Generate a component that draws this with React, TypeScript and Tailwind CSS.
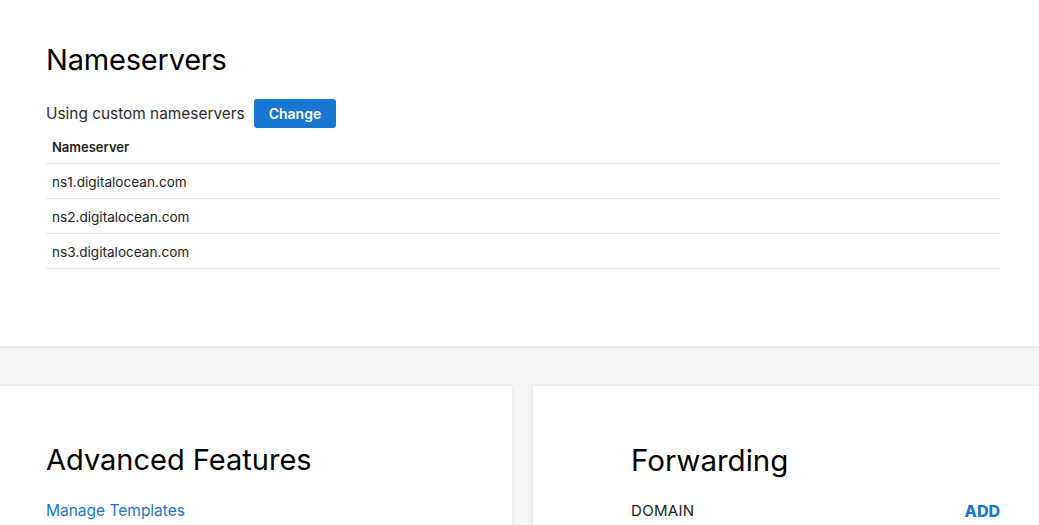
const servers = ['ns1.digitalocean.com', 'ns2.digitalocean.com', 'ns3.digitalocean.com'];

const App = () => {
  return (
    <div className="h-screen bg-[#f5f6f8] text-[#111] font-['Inter',sans-serif] overflow-hidden">
      <section className="bg-white pl-[46px] pr-[39px] pt-[40px] h-[346px] shadow-[0_1px_4px_rgba(0,0,0,0.12)] relative z-10">
        <h1 className="text-[29px] leading-[40px] font-normal tracking-[-0.2px] text-black">Nameservers</h1>
        <div className="flex items-center gap-[9px] mt-[19px]">
          <span className="text-[15.4px] text-[#2b2b2b]">Using custom nameservers</span>
          <button className="bg-[#1976d2] text-white font-semibold text-[14px] h-[29px] px-[15px] rounded-[3px]">
            Change
          </button>
        </div>
        <table className="w-full text-[13.6px] border-collapse">
          <thead>
            <tr className="border-b border-[#e6e6e6]">
              <th className="text-left font-semibold text-[13px] h-[35px] pt-[4px] pl-[6px] text-[#222]">Nameserver</th>
            </tr>
          </thead>
          <tbody>
            {servers.map((s) => (
              <tr key={s} className="border-b border-[#e6e6e6]">
                <td className="h-[35px] pt-[4px] pl-[6px] text-[#222]">{s}</td>
              </tr>
            ))}
          </tbody>
        </table>
      </section>

      <div className="flex gap-[21px] pt-[40px]">
        <div className="w-[512px] shrink-0 bg-white h-[160px] shadow-[0_0_4px_rgba(0,0,0,0.1)] pl-[46px] pt-[54px]">
          <h2 className="text-[29px] leading-[40px] text-black">Advanced Features</h2>
          <a href="#" className="block mt-[19px] text-[15.5px] text-[#1976d2]">Manage Templates</a>
        </div>
        <div className="flex-1 bg-white h-[160px] shadow-[0_0_4px_rgba(0,0,0,0.1)] pl-[98px] pr-[39px] pt-[54px]">
          <h2 className="text-[29.5px] leading-[40px] text-black">Forwarding</h2>
          <div className="flex items-center justify-between mt-[19px]">
            <span className="text-[15px] text-[#222] tracking-[0.3px]">DOMAIN</span>
            <a href="#" className="text-[16px] font-extrabold text-[#1976d2]">ADD</a>
          </div>
        </div>
      </div>
    </div>
  );
};

export default App;
